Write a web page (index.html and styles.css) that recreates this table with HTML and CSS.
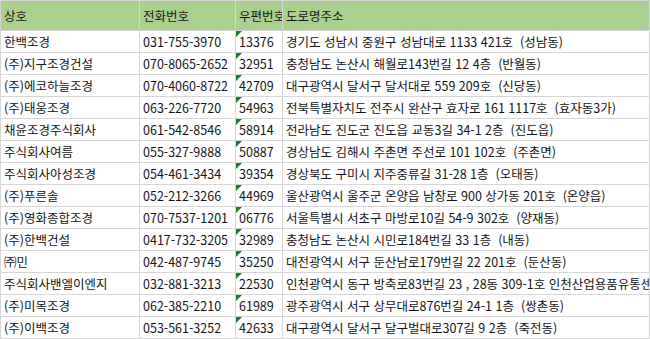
FILE: index.html
```html
<!DOCTYPE html>
<html lang="ko">
<head>
<meta charset="utf-8">
<title>조경업체 목록</title>
<link rel="stylesheet" href="styles.css">
</head>
<body>
<div class="sheet">
  <div class="cell head">상호</div><div class="cell head">전화번호</div><div class="cell head">우편번호</div><div class="cell head">도로명주소</div>

  <div class="cell">한백조경</div><div class="cell">031-755-3970</div><div class="cell zip">13376</div><div class="cell">경기도 성남시 중원구 성남대로 1133 421호 &nbsp;(성남동)</div>
  <div class="cell">(주)지구조경건설</div><div class="cell">070-8065-2652</div><div class="cell zip">32951</div><div class="cell">충청남도 논산시 해월로143번길 12 4층 &nbsp;(반월동)</div>
  <div class="cell">(주)에코하늘조경</div><div class="cell">070-4060-8722</div><div class="cell zip">42709</div><div class="cell">대구광역시 달서구 달서대로 559 209호 &nbsp;(신당동)</div>
  <div class="cell">(주)태웅조경</div><div class="cell">063-226-7720</div><div class="cell zip">54963</div><div class="cell">전북특별자치도 전주시 완산구 효자로 161 1117호 &nbsp;(효자동3가)</div>
  <div class="cell">채윤조경주식회사</div><div class="cell">061-542-8546</div><div class="cell zip">58914</div><div class="cell">전라남도 진도군 진도읍 교동3길 34-1 2층 &nbsp;(진도읍)</div>
  <div class="cell">주식회사여름</div><div class="cell">055-327-9888</div><div class="cell zip">50887</div><div class="cell">경상남도 김해시 주촌면 주선로 101 102호 &nbsp;(주촌면)</div>
  <div class="cell">주식회사아성조경</div><div class="cell">054-461-3434</div><div class="cell zip">39354</div><div class="cell">경상북도 구미시 지주중류길 31-28 1층 &nbsp;(오태동)</div>
  <div class="cell">(주)푸른솔</div><div class="cell">052-212-3266</div><div class="cell zip">44969</div><div class="cell">울산광역시 울주군 온양읍 남창로 900 상가동 201호 &nbsp;(온양읍)</div>
  <div class="cell">(주)영화종합조경</div><div class="cell">070-7537-1201</div><div class="cell zip">06776</div><div class="cell">서울특별시 서초구 마방로10길 54-9 302호 &nbsp;(양재동)</div>
  <div class="cell">(주)한백건설</div><div class="cell">0417-732-3205</div><div class="cell zip">32989</div><div class="cell">충청남도 논산시 시민로184번길 33 1층 &nbsp;(내동)</div>
  <div class="cell">㈜민</div><div class="cell">042-487-9745</div><div class="cell zip">35250</div><div class="cell">대전광역시 서구 둔산남로179번길 22 201호 &nbsp;(둔산동)</div>
  <div class="cell">주식회사밴엘이엔지</div><div class="cell">032-881-3213</div><div class="cell zip">22530</div><div class="cell">인천광역시 동구 방축로83번길 23 , 28동 309-1호 인천산업용품유통센터</div>
  <div class="cell">(주)미목조경</div><div class="cell">062-385-2210</div><div class="cell zip">61989</div><div class="cell">광주광역시 서구 상무대로876번길 24-1 1층 &nbsp;(쌍촌동)</div>
  <div class="cell">(주)이백조경</div><div class="cell">053-561-3252</div><div class="cell zip">42633</div><div class="cell">대구광역시 달서구 달구벌대로307길 9 2층 &nbsp;(죽전동)</div>
</div>
</body>
</html>
```

FILE: styles.css
```css
html, body {
  margin: 0;
  padding: 0;
  background: #ffffff;
}

body {
  width: 650px;
  height: 339px;
  overflow: hidden;
  font-family: "Noto Sans CJK KR", "Noto Sans", sans-serif;
  font-size: 12.5px;
  color: #141414;
}

.sheet {
  display: grid;
  grid-template-columns: 138px 95px 46px 366px;
  grid-template-rows: 29px;
  grid-auto-rows: 21px;
  gap: 1px;
  padding: 1px;
  width: 650px;
  box-sizing: border-box;
  background: #d6d6d6;
}

.cell {
  background: #ffffff;
  padding-left: 3px;
  line-height: 21px;
  white-space: nowrap;
  overflow: hidden;
  position: relative;
}

.head {
  background: #a9d08e;
  line-height: 29px;
}

.zip::before {
  content: "";
  position: absolute;
  top: 0;
  left: 0;
  border-top: 6px solid #1f7a2e;
  border-right: 6px solid transparent;
}
```
